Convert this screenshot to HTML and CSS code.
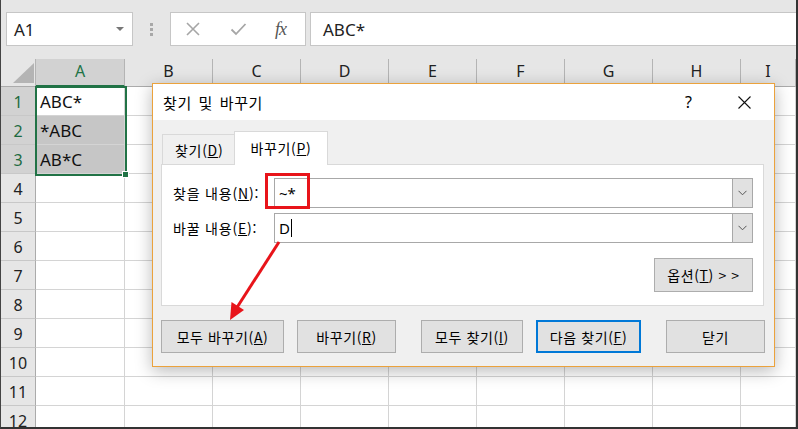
FILE: index.html
```html
<!DOCTYPE html>
<html lang="ko">
<head>
<meta charset="utf-8">
<title>찾기 및 바꾸기</title>
<link rel="stylesheet" href="styles.css">
</head>
<body>
<div class="window">
  <div class="toolbar">
    <div class="namebox"><span>A1</span><span class="nb-caret"></span></div>
    <div class="grip"><i></i><i></i><i></i></div>
    <div class="fxbtns">
      <svg class="ico" width="16" height="16" viewBox="0 0 16 16"><path d="M2 2 L14 14 M14 2 L2 14" stroke="#a6a6a6" stroke-width="1.6" fill="none"/></svg>
      <svg class="ico" width="17" height="16" viewBox="0 0 17 16"><path d="M1.5 8.5 L6 13 L15.5 3" stroke="#a6a6a6" stroke-width="1.8" fill="none"/></svg>
      <span class="fx">fx</span>
    </div>
    <div class="formula">ABC*</div>
  </div>
  <div class="sheet">
    <div class="row hdr">
      <div class="cell corner"><span class="tri"></span></div>
      <div class="cell ch on">A</div><div class="cell ch">B</div><div class="cell ch">C</div><div class="cell ch">D</div><div class="cell ch">E</div><div class="cell ch">F</div><div class="cell ch">G</div><div class="cell ch">H</div><div class="cell ch">I</div>
    </div>
    <div class="row"><div class="cell rh on">1</div><div class="cell">ABC*</div><div class="cell"></div><div class="cell"></div><div class="cell"></div><div class="cell"></div><div class="cell"></div><div class="cell"></div><div class="cell"></div><div class="cell"></div></div>
    <div class="row"><div class="cell rh on">2</div><div class="cell sel">*ABC</div><div class="cell"></div><div class="cell"></div><div class="cell"></div><div class="cell"></div><div class="cell"></div><div class="cell"></div><div class="cell"></div><div class="cell"></div></div>
    <div class="row"><div class="cell rh on">3</div><div class="cell sel">AB*C</div><div class="cell"></div><div class="cell"></div><div class="cell"></div><div class="cell"></div><div class="cell"></div><div class="cell"></div><div class="cell"></div><div class="cell"></div></div>
    <div class="row"><div class="cell rh">4</div><div class="cell"></div><div class="cell"></div><div class="cell"></div><div class="cell"></div><div class="cell"></div><div class="cell"></div><div class="cell"></div><div class="cell"></div><div class="cell"></div></div>
    <div class="row"><div class="cell rh">5</div><div class="cell"></div><div class="cell"></div><div class="cell"></div><div class="cell"></div><div class="cell"></div><div class="cell"></div><div class="cell"></div><div class="cell"></div><div class="cell"></div></div>
    <div class="row"><div class="cell rh">6</div><div class="cell"></div><div class="cell"></div><div class="cell"></div><div class="cell"></div><div class="cell"></div><div class="cell"></div><div class="cell"></div><div class="cell"></div><div class="cell"></div></div>
    <div class="row"><div class="cell rh">7</div><div class="cell"></div><div class="cell"></div><div class="cell"></div><div class="cell"></div><div class="cell"></div><div class="cell"></div><div class="cell"></div><div class="cell"></div><div class="cell"></div></div>
    <div class="row"><div class="cell rh">8</div><div class="cell"></div><div class="cell"></div><div class="cell"></div><div class="cell"></div><div class="cell"></div><div class="cell"></div><div class="cell"></div><div class="cell"></div><div class="cell"></div></div>
    <div class="row"><div class="cell rh">9</div><div class="cell"></div><div class="cell"></div><div class="cell"></div><div class="cell"></div><div class="cell"></div><div class="cell"></div><div class="cell"></div><div class="cell"></div><div class="cell"></div></div>
    <div class="row"><div class="cell rh">10</div><div class="cell"></div><div class="cell"></div><div class="cell"></div><div class="cell"></div><div class="cell"></div><div class="cell"></div><div class="cell"></div><div class="cell"></div><div class="cell"></div></div>
    <div class="row"><div class="cell rh">11</div><div class="cell"></div><div class="cell"></div><div class="cell"></div><div class="cell"></div><div class="cell"></div><div class="cell"></div><div class="cell"></div><div class="cell"></div><div class="cell"></div></div>
    <div class="row"><div class="cell rh">12</div><div class="cell"></div><div class="cell"></div><div class="cell"></div><div class="cell"></div><div class="cell"></div><div class="cell"></div><div class="cell"></div><div class="cell"></div><div class="cell"></div></div>
    <div class="selection"><span class="handle"></span></div>
  </div>

  <div class="dialog">
    <div class="dlg-title">
      <span class="dlg-name">찾기 및 바꾸기</span>
      <span class="help">?</span>
      <svg class="close" width="13" height="13" viewBox="0 0 13 13"><path d="M0.5 0.5 L12.5 12.5 M12.5 0.5 L0.5 12.5" stroke="#111" stroke-width="1.1" fill="none"/></svg>
    </div>
    <div class="dlg-body">
      <div class="tabs">
        <div class="tab">찾기(<u>D</u>)</div>
        <div class="tab active">바꾸기(<u>P</u>)</div>
      </div>
      <div class="panel">
        <div class="field">
          <label class="flabel">찾을 내용(<u>N</u>):</label>
          <div class="combo"><span class="cval">~*</span><span class="cdrop"><svg width="9" height="6" viewBox="0 0 9 6"><path d="M0.5 0.8 L4.5 4.8 L8.5 0.8" stroke="#555" stroke-width="1" fill="none"/></svg></span></div>
        </div>
        <div class="field">
          <label class="flabel">바꿀 내용(<u>E</u>):</label>
          <div class="combo"><span class="cval">D<span class="caret"></span></span><span class="cdrop"><svg width="9" height="6" viewBox="0 0 9 6"><path d="M0.5 0.8 L4.5 4.8 L8.5 0.8" stroke="#555" stroke-width="1" fill="none"/></svg></span></div>
        </div>
        <div class="opt-row"><button class="btn opt">옵션(<u>T</u>) &gt; &gt;</button></div>
      </div>
      <div class="btn-row">
        <button class="btn b-all">모두 바꾸기(<u>A</u>)</button>
        <button class="btn b-rep">바꾸기(<u>R</u>)</button>
        <button class="btn b-findall">모두 찾기(<u>I</u>)</button>
        <button class="btn b-next">다음 찾기(<u>F</u>)</button>
        <button class="btn b-close">닫기</button>
      </div>
    </div>
  </div>

  <div class="redbox"></div>
  <svg class="arrow" width="798" height="429" viewBox="0 0 798 429">
    <line x1="279" y1="242" x2="236" y2="309" stroke="#e8141a" stroke-width="3"/>
    <polygon points="230,320 244,310 231.5,302" fill="#e8141a"/>
  </svg>
</div>
</body>
</html>
```
FILE: styles.css
```css
* { box-sizing: border-box; }
html, body { margin: 0; padding: 0; }
body {
  width: 798px;
  height: 429px;
  overflow: hidden;
  background: #fff;
  font-family: "Noto Sans", "Noto Sans CJK KR", sans-serif;
}
.window {
  position: relative;
  width: 798px;
  height: 429px;
  border-left: 1px solid #444;
  border-right: 2px solid #333;
  border-bottom: 2px solid #333;
  background: #e6e6e6;
  overflow: hidden;
  display: flex;
  flex-direction: column;
}

/* toolbar */
.toolbar {
  height: 59px;
  flex: none;
  display: flex;
  align-items: flex-start;
  padding: 12px 0 0 5px;
  background: #e6e6e6;
}
.namebox {
  width: 127px;
  height: 34px;
  background: #fff;
  border: 1px solid #c6c6c6;
  display: flex;
  align-items: center;
  justify-content: space-between;
  padding: 0 8px 0 7px;
  font-size: 17px;
  color: #222;
}
.nb-caret {
  width: 0; height: 0;
  border-left: 4px solid transparent;
  border-right: 4px solid transparent;
  border-top: 4px solid #777;
}
.grip {
  margin: 11px 0 0 17px;
  display: flex;
  flex-direction: column;
  gap: 2px;
}
.grip i { display: block; width: 3px; height: 3px; background: #a8a8a8; }
.fxbtns {
  margin-left: 17px;
  width: 136px;
  height: 34px;
  background: #fff;
  border: 1px solid #c6c6c6;
  display: flex;
  align-items: center;
  padding-left: 14px;
  gap: 29px;
}
.fx {
  font-family: "Liberation Serif", serif;
  font-style: italic;
  font-size: 18px;
  color: #555;
  letter-spacing: -1px;
  margin-left: -1px;
}
.formula {
  margin-left: 4px;
  flex: 1;
  height: 34px;
  background: #fff;
  border: 1px solid #c6c6c6;
  border-right: none;
  display: flex;
  align-items: center;
  padding-left: 12px;
  font-size: 17px;
  color: #222;
}

/* sheet */
.sheet {
  flex: 1;
  overflow: hidden;
  background: #fff;
  position: relative;
}
.row {
  display: grid;
  grid-template-columns: 35px 89px repeat(7, 88px) 1fr;
  height: 29px;
}
.row.hdr { height: 28px; background: #e6e6e6; }
.cell {
  border-right: 1px solid #d4d4d4;
  border-bottom: 1px solid #d4d4d4;
  font-size: 17px;
  padding-left: 4px;
  display: flex;
  align-items: center;
  white-space: nowrap;
  color: #111;
}
.cell.sel { background: #c6c6c6; }
.ch {
  background: #e6e6e6;
  border-right: 1px solid #b4b4b4;
  border-bottom: 1px solid #ababab;
  justify-content: center;
  padding: 0 0 3px 0;
  font-size: 16px;
  color: #222;
}
.ch.on { background: #d2d2d2; color: #217346; border-bottom: 2px solid #217346; }
.corner {
  background: #e6e6e6;
  border-right: 1px solid #b4b4b4;
  border-bottom: 1px solid #ababab;
  padding: 0 1px 3px 0;
  align-items: flex-end;
  justify-content: flex-end;
}
.tri {
  display: block;
  width: 21px;
  height: 20px;
  background: #b4b4b4;
  clip-path: polygon(100% 0, 100% 100%, 0 100%);
}
.rh {
  background: #e6e6e6;
  border-right: 1px solid #ababab;
  border-bottom: 1px solid #c8c8c8;
  justify-content: center;
  padding: 2px 0 0 0;
  font-size: 16px;
  color: #222;
}
.rh.on { background: #d2d2d2; color: #1e6b41; }
.selection {
  position: absolute;
  left: 34px;
  top: 27px;
  width: 92px;
  height: 90px;
  border: 2px solid #217346;
}
.handle {
  position: absolute;
  right: -4px;
  bottom: -4px;
  width: 7px;
  height: 7px;
  background: #217346;
  border: 1px solid #fff;
}

/* dialog */
.dialog {
  position: absolute;
  left: 151px;
  top: 83px;
  width: 623px;
  height: 284px;
  border: 1px solid #eba23c;
  background: #f0f0f0;
  box-shadow: 0 4px 16px rgba(0, 0, 0, 0.28);
  display: flex;
  flex-direction: column;
  font-family: "Noto Sans CJK KR", "Noto Sans", sans-serif;
  color: #000;
}
.dlg-title {
  height: 36px;
  flex: none;
  background: #fff;
  display: flex;
  align-items: center;
  padding: 0 23px 0 10px;
}
.dlg-name { font-size: 15px; letter-spacing: 0.6px; word-spacing: 2px; flex: 1; }
.help { font-size: 16px; margin-right: 46px; font-family: "Noto Sans", sans-serif; }
.dlg-body {
  flex: 1;
  padding: 11px 9px 0 8px;
  display: flex;
  flex-direction: column;
}
.tabs {
  display: flex;
  align-items: flex-end;
  height: 33px;
  padding-left: 1px;
  position: relative;
  z-index: 1;
}
.tab {
  height: 30px;
  padding: 0 11px 0 12px;
  border: 1px solid #d9d9d9;
  border-bottom: none;
  border-right: none;
  display: flex;
  align-items: center;
  font-size: 14px;
  letter-spacing: 0.7px;
}
.tab.active {
  height: 34px;
  margin-bottom: -1px;
  background: #fff;
  border-right: 1px solid #d9d9d9;
  padding: 0 15px 2px 15px;
}
.panel {
  background: #fff;
  border: 1px solid #d9d9d9;
  margin-right: 1px;
  padding: 13px 10px 13px 11px;
  display: flex;
  flex-direction: column;
  gap: 5px;
}
.field {
  display: flex;
  align-items: center;
  height: 30px;
}
.flabel {
  width: 101px;
  font-size: 14px;
  letter-spacing: 0.8px;
}
.combo {
  flex: 1;
  height: 30px;
  border: 1px solid #a8a8a8;
  background: #fff;
  display: flex;
  align-items: stretch;
}
.cval {
  flex: 1;
  display: flex;
  align-items: center;
  padding-left: 4px;
  font-size: 15px;
  font-family: "Noto Sans", sans-serif;
}
.caret { display: inline-block; width: 1px; height: 18px; background: #000; margin-left: 1px; }
.cdrop {
  width: 20px;
  background: #e1e1e1;
  border-left: 1px solid #a8a8a8;
  display: flex;
  align-items: center;
  justify-content: center;
}
.opt-row {
  display: flex;
  justify-content: flex-end;
  margin-top: 10px;
}
.btn {
  height: 33px;
  background: #e1e1e1;
  border: 1px solid #adadad;
  border-radius: 0;
  padding: 0;
  font-family: "Noto Sans CJK KR", "Noto Sans", sans-serif;
  font-size: 14px;
  letter-spacing: 0.6px;
  color: #000;
}
.btn.opt { width: 99px; height: 34px; }
.btn-row {
  display: flex;
  margin-top: 14px;
}
.b-all { width: 123px; }
.b-rep { width: 99px; margin-left: 13px; }
.b-findall { width: 102px; margin-left: 25px; }
.b-next { width: 105px; margin-left: 13px; border: 2px solid #0078d7; }
.b-close { width: 99px; margin-left: 25px; }

/* annotations */
.redbox {
  position: absolute;
  left: 264px;
  top: 173px;
  width: 45px;
  height: 36px;
  border: 3px solid #e8141a;
}
.arrow {
  position: absolute;
  left: -1px;
  top: 0;
  pointer-events: none;
}
```
